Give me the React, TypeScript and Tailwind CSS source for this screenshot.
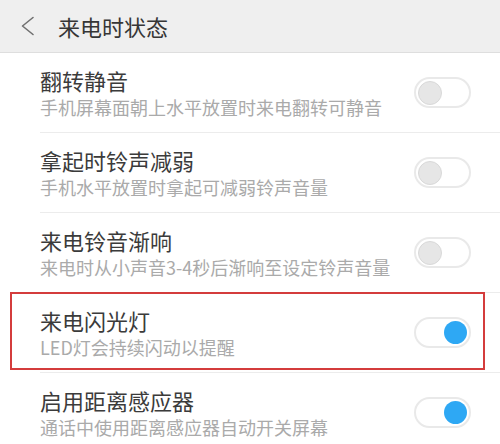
const rows = [
  { title: "翻转静音", desc: "手机屏幕面朝上水平放置时来电翻转可静音", on: false },
  { title: "拿起时铃声减弱", desc: "手机水平放置时拿起可减弱铃声音量", on: false },
  { title: "来电铃音渐响", desc: "来电时从小声音3-4秒后渐响至设定铃声音量", on: false },
  { title: "来电闪光灯", desc: "LED灯会持续闪动以提醒", on: true, marked: true },
  { title: "启用距离感应器", desc: "通话中使用距离感应器自动开关屏幕", on: true },
];

function Toggle({ on }: { on: boolean }) {
  return (
    <div
      className={`flex h-[31px] w-[57px] shrink-0 items-center rounded-full border-2 border-[#e9e9e9] bg-white px-[2px] ${
        on ? "justify-end" : "justify-start"
      }`}
    >
      {on ? (
        <div className="h-[23px] w-[23px] rounded-full bg-[#2ea8f4]" />
      ) : (
        <div className="h-[24px] w-[24px] rounded-full border border-[#d9d9d9] bg-[#e6e6e6]" />
      )}
    </div>
  );
}

export default function App() {
  return (
    <div
      className="relative h-[444px] w-[500px] overflow-hidden bg-white"
      style={{ fontFamily: '"Noto Sans CJK SC", "Noto Sans", sans-serif' }}
    >
      {/* Header */}
      <div className="flex h-[53px] items-center border-b border-[#dedede] bg-[#efefef]">
        <svg width="14" height="20" viewBox="0 0 14 20" className="ml-[21px]" fill="none">
          <polyline points="12,1.5 1.5,10 12,18.5" stroke="#707070" strokeWidth="1.6" strokeLinecap="round" strokeLinejoin="round" />
        </svg>
        <span className="ml-[23px] text-[22px] leading-none text-[#363636]">来电时状态</span>
      </div>

      {/* Rows */}
      {rows.map((r) => (
        <div key={r.title} className="relative flex h-[80px] items-center pl-[40px]">
          <div className="flex h-full flex-1 items-center border-b border-[#ececec] pr-[29px]">
            <div className="flex flex-1 flex-col">
              <span className="text-[22px] leading-[28px] text-[#3b3b3b]">{r.title}</span>
              <span className="text-[18px] leading-[26px] text-[#aaaaaa]">{r.desc}</span>
            </div>
            <Toggle on={r.on} />
          </div>
          {r.marked && (
            <div className="pointer-events-none absolute left-[10px] right-[15px] top-[-1px] bottom-[3px] border-2 border-[#d43c3c]" />
          )}
        </div>
      ))}
    </div>
  );
}
